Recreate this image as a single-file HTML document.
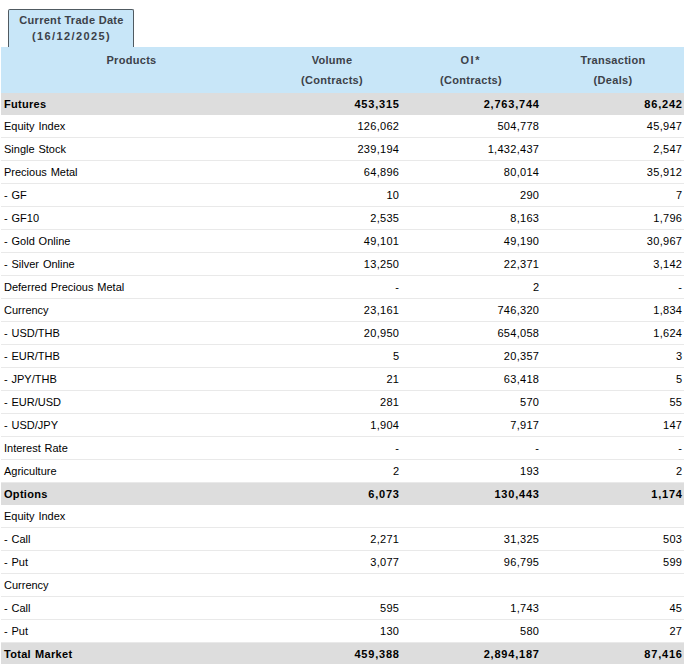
<!DOCTYPE html>
<html><head><meta charset="utf-8"><style>
html,body{margin:0;padding:0;background:#fff;}
body{width:685px;height:664px;overflow:hidden;position:relative;font-family:"Liberation Sans",sans-serif;font-size:11px;color:#000;}
.tab{position:absolute;left:8px;top:9px;width:124px;height:38px;border:1px solid #505a61;border-bottom:none;border-radius:2px 2px 0 0;background:#c8e6f8;}
.tab div{position:absolute;left:1px;right:0;text-align:center;font-weight:bold;color:#3c4148;white-space:nowrap;line-height:16px;}
.hdr{position:absolute;left:1px;top:47px;width:683px;height:46px;background:#c8e6f8;}
.hdr div{position:absolute;text-align:center;font-weight:bold;color:#3c4148;white-space:nowrap;line-height:20px;letter-spacing:0.3px;top:3px;}
.rows{position:absolute;left:1px;top:93px;width:683px;}
.r{position:relative;height:22px;border-bottom:1px solid #e9e9e9;}
.r.g{background:#dddddd;border-bottom:none;font-weight:bold;}
.r span{position:absolute;top:0;line-height:22px;white-space:nowrap;}
.c0{left:3px;word-spacing:0.8px;}
.c1{right:285px;}
.c2{right:145px;}
.c3{right:2px;}
.n{letter-spacing:0.3px;margin-right:-0.3px;}
.r.g .n{letter-spacing:0.8px;margin-right:-0.8px;}
.r.g .c0{letter-spacing:0.3px;}
</style></head><body>
<div class="tab"><div style="top:2px;letter-spacing:0.3px">Current Trade Date</div><div style="top:18px;letter-spacing:1.4px">(16/12/2025)</div></div>
<div class="hdr">
<div style="left:0;width:261px">Products</div>
<div style="left:261px;width:140px">Volume<br>(Contracts)</div>
<div style="left:400px;width:140px"><span style="letter-spacing:1.5px;margin-right:-1.5px;position:relative;left:-1px">OI*</span><br>(Contracts)</div>
<div style="left:541px;width:142px">Transaction<br>(Deals)</div>
</div>
<div class="rows">
<div class="r g"><span class="c0">Futures</span><span class="n c1">453,315</span><span class="n c2">2,763,744</span><span class="n c3">86,242</span></div>
<div class="r"><span class="c0">Equity Index</span><span class="n c1">126,062</span><span class="n c2">504,778</span><span class="n c3">45,947</span></div>
<div class="r"><span class="c0">Single Stock</span><span class="n c1">239,194</span><span class="n c2">1,432,437</span><span class="n c3">2,547</span></div>
<div class="r"><span class="c0">Precious Metal</span><span class="n c1">64,896</span><span class="n c2">80,014</span><span class="n c3">35,912</span></div>
<div class="r"><span class="c0">- GF</span><span class="n c1">10</span><span class="n c2">290</span><span class="n c3">7</span></div>
<div class="r"><span class="c0">- GF10</span><span class="n c1">2,535</span><span class="n c2">8,163</span><span class="n c3">1,796</span></div>
<div class="r"><span class="c0">- Gold Online</span><span class="n c1">49,101</span><span class="n c2">49,190</span><span class="n c3">30,967</span></div>
<div class="r"><span class="c0">- Silver Online</span><span class="n c1">13,250</span><span class="n c2">22,371</span><span class="n c3">3,142</span></div>
<div class="r"><span class="c0">Deferred Precious Metal</span><span class="n c1">-</span><span class="n c2">2</span><span class="n c3">-</span></div>
<div class="r"><span class="c0">Currency</span><span class="n c1">23,161</span><span class="n c2">746,320</span><span class="n c3">1,834</span></div>
<div class="r"><span class="c0">- USD/THB</span><span class="n c1">20,950</span><span class="n c2">654,058</span><span class="n c3">1,624</span></div>
<div class="r"><span class="c0">- EUR/THB</span><span class="n c1">5</span><span class="n c2">20,357</span><span class="n c3">3</span></div>
<div class="r"><span class="c0">- JPY/THB</span><span class="n c1">21</span><span class="n c2">63,418</span><span class="n c3">5</span></div>
<div class="r"><span class="c0">- EUR/USD</span><span class="n c1">281</span><span class="n c2">570</span><span class="n c3">55</span></div>
<div class="r"><span class="c0">- USD/JPY</span><span class="n c1">1,904</span><span class="n c2">7,917</span><span class="n c3">147</span></div>
<div class="r"><span class="c0">Interest Rate</span><span class="n c1">-</span><span class="n c2">-</span><span class="n c3">-</span></div>
<div class="r"><span class="c0">Agriculture</span><span class="n c1">2</span><span class="n c2">193</span><span class="n c3">2</span></div>
<div class="r g"><span class="c0">Options</span><span class="n c1">6,073</span><span class="n c2">130,443</span><span class="n c3">1,174</span></div>
<div class="r"><span class="c0">Equity Index</span><span class="n c1"></span><span class="n c2"></span><span class="n c3"></span></div>
<div class="r"><span class="c0">- Call</span><span class="n c1">2,271</span><span class="n c2">31,325</span><span class="n c3">503</span></div>
<div class="r"><span class="c0">- Put</span><span class="n c1">3,077</span><span class="n c2">96,795</span><span class="n c3">599</span></div>
<div class="r"><span class="c0">Currency</span><span class="n c1"></span><span class="n c2"></span><span class="n c3"></span></div>
<div class="r"><span class="c0">- Call</span><span class="n c1">595</span><span class="n c2">1,743</span><span class="n c3">45</span></div>
<div class="r"><span class="c0">- Put</span><span class="n c1">130</span><span class="n c2">580</span><span class="n c3">27</span></div>
<div class="r g"><span class="c0">Total Market</span><span class="n c1">459,388</span><span class="n c2">2,894,187</span><span class="n c3">87,416</span></div>
</div>
</body></html>
